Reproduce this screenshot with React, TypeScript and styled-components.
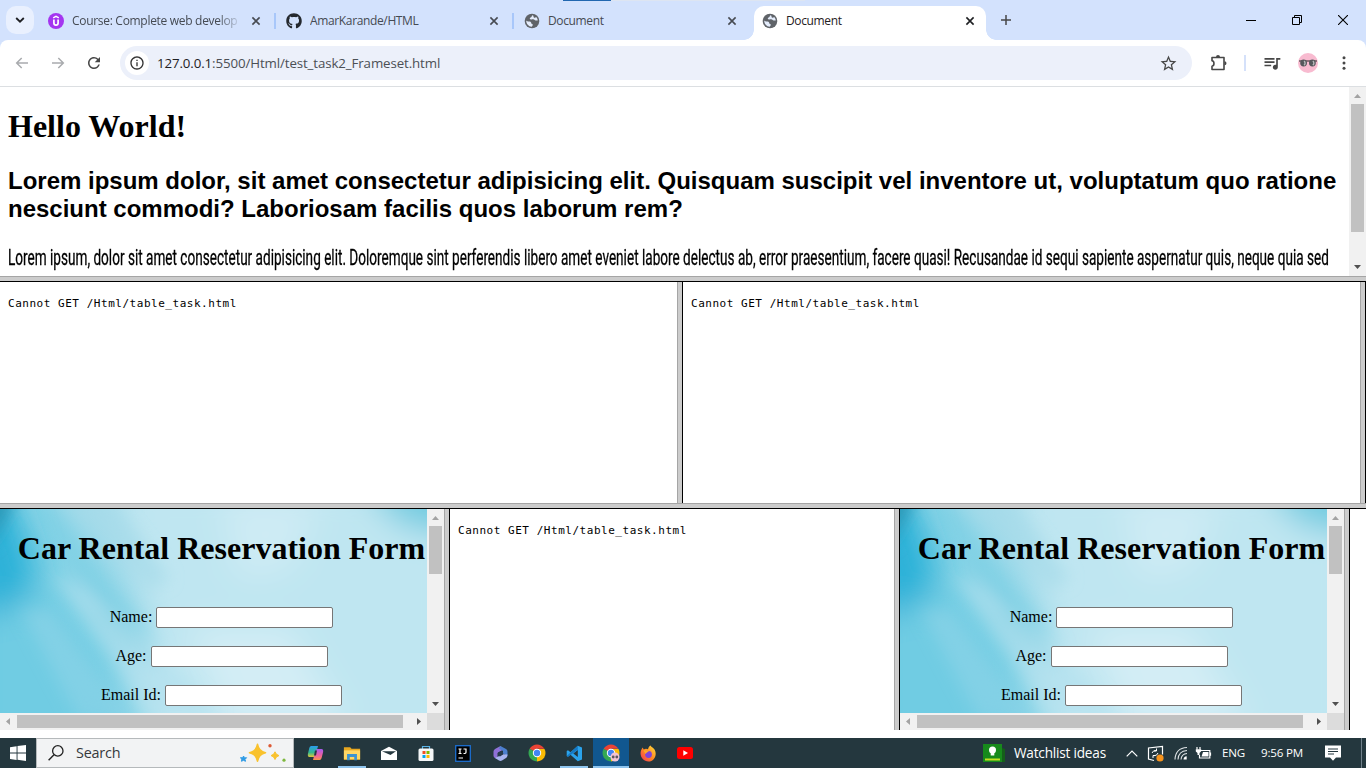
import React from "react";
import styled, { createGlobalStyle } from "styled-components";
import { FaGithub } from "react-icons/fa";
import { MdQueueMusic, MdStarBorder, MdRefresh, MdInfoOutline } from "react-icons/md";

const Global = createGlobalStyle`
  *, *::before, *::after { box-sizing: border-box; }
  html, body { margin: 0; padding: 0; background: #fff; overflow: hidden; }
  svg { display: block; flex: none; }
`;

const UI = `"Open Sans", "Noto Sans", sans-serif`;
const SERIF = `"Liberation Serif", "Times New Roman", serif`;

const Screen = styled.div`
  width: 1366px;
  height: 768px;
  display: flex;
  flex-direction: column;
  background: #fff;
  overflow: hidden;
  font-family: ${UI};
`;

/* ---------- browser chrome ---------- */
const TabStrip = styled.div`
  height: 40px;
  flex: none;
  position: relative;
  display: flex;
  background: #d3e2fd;
`;
const LoadingHint = styled.div`
  position: absolute;
  top: 0;
  left: 563px;
  width: 242px;
  height: 1px;
  background: linear-gradient(90deg, #2167b0 0 48px, #dde5f2 48px);
`;
const TabSearch = styled.div`
  width: 28px;
  height: 28px;
  margin: 6px 6px 0;
  border-radius: 10px;
  background: #e9f0fe;
  display: flex;
  align-items: center;
  justify-content: center;
`;
const TabBox = styled.div<{ $active?: boolean }>`
  width: ${(p) => (p.$active ? 232 : 238)}px;
  height: 34px;
  margin-top: 6px;
  padding-left: 8px;
  padding-bottom: 5px;
  display: flex;
  align-items: center;
  position: relative;
  background: ${(p) => (p.$active ? "#fff" : "transparent")};
  border-radius: 10px 10px 0 0;
  color: ${(p) => (p.$active ? "#1f2023" : "#454a52")};
  &::before, &::after {
    content: "";
    display: ${(p) => (p.$active ? "block" : "none")};
    position: absolute;
    bottom: 0;
    width: 10px;
    height: 10px;
  }
  &::before { left: -10px; background: radial-gradient(circle at 0 0, transparent 9.5px, #fff 10px); }
  &::after { right: -10px; background: radial-gradient(circle at 100% 0, transparent 9.5px, #fff 10px); }
`;
const TabTitle = styled.span<{ $fade?: boolean; $ls: number }>`
  width: 168px;
  margin-left: 8px;
  margin-right: 11px;
  font-size: 12px;
  line-height: 18px;
  letter-spacing: ${(p) => p.$ls}px;
  white-space: nowrap;
  overflow: hidden;
  ${(p) => p.$fade && "mask-image: linear-gradient(90deg, #000 146px, transparent 170px);"}
`;
const TabDivider = styled.i`
  width: 2px;
  height: 16px;
  margin-left: 13px;
  background: #a8c7fa;
`;
const NewTab = styled.div`
  width: 28px;
  margin-left: 6px;
  height: 40px;
  display: flex;
  align-items: center;
  justify-content: center;
`;
const WindowButtons = styled.div`
  margin-left: auto;
  display: flex;
  height: 40px;
`;
const WindowButton = styled.div`
  width: 46px;
  display: flex;
  align-items: center;
  justify-content: center;
`;

const ToolbarBack = styled.div`
  flex: none;
  height: 47px;
  background: #d3e2fd;
`;
const Toolbar = styled.div`
  height: 47px;
  padding-left: 4px;
  display: flex;
  align-items: center;
  background: #fff;
  border-radius: 8px 8px 0 0;
  border-bottom: 1px solid #dcdfe2;
`;
const ToolButton = styled.div<{ $w?: number }>`
  width: ${(p) => p.$w ?? 36}px;
  flex: none;
  display: flex;
  justify-content: center;
  align-items: center;
  color: #474747;
`;
const Omnibox = styled.div`
  width: 1072px;
  flex: none;
  height: 34px;
  margin-left: 8px;
  padding: 0 14px 0 5px;
  border-radius: 17px;
  background: #ecf0fa;
  display: flex;
  align-items: center;
  color: #474747;
`;
const SiteInfo = styled.div`
  width: 24px;
  height: 24px;
  border-radius: 50%;
  background: #fff;
  display: flex;
  align-items: center;
  justify-content: center;
  color: #333;
`;
const Url = styled.span`
  margin-left: 8px;
  flex: 1;
  font-size: 13.3px;
  line-height: 20px;
  letter-spacing: -0.11px;
  color: #4b4f55;
  b { font-weight: 400; color: #1f2023; }
`;
const ToolDivider = styled.i`
  width: 2px;
  height: 16px;
  margin-right: 8px;
  background: #d5e1fa;
`;

/* ---------- frameset ---------- */
const Row = styled.div<{ $h: number }>`
  height: ${(p) => p.$h}px;
  flex: none;
  display: flex;
  overflow: hidden;
`;
const HSplit = styled.div`
  height: 6px;
  flex: none;
  background: #ccc;
  border-top: 1px solid #a5a5a5;
  border-bottom: 1px solid #000;
`;
const VSplit = styled.div`
  width: 6px;
  flex: none;
  background: #ccc;
  border-left: 1px solid #a5a5a5;
  border-right: 1px solid #000;
`;
const Frame = styled.div<{ $w: number }>`
  width: ${(p) => p.$w}px;
  flex: none;
  display: flex;
  overflow: hidden;
  background: #fff;
`;
const Article = styled.div`
  flex: 1;
  padding: 0 8px;
  overflow: hidden;
  color: #000;
`;
const Hello = styled.h1`
  margin: 21px 0 0;
  font: bold 32px/37px ${SERIF};
`;
const Intro = styled.h2`
  margin: 22px 0 0;
  font: bold 24px/28px "Liberation Sans", Arial, sans-serif;
  white-space: nowrap;
`;
const Narrow = styled.p`
  margin: 20px 0 0;
  width: max-content;
  font: 400 21.5px/30px Roboto, sans-serif;
  white-space: nowrap;
  transform: scaleX(0.632);
  transform-origin: 0 0;
  -webkit-text-stroke: 0.3px #000;
`;
const Pre = styled.pre`
  margin: 14px 8px 0;
  font: 11px/16px "DejaVu Sans Mono", monospace;
  letter-spacing: 0.53px;
  color: #000;
`;

const Track = styled.div<{ $horizontal?: boolean }>`
  flex: none;
  display: flex;
  flex-direction: ${(p) => (p.$horizontal ? "row" : "column")};
  align-items: center;
  ${(p) => (p.$horizontal ? "height: 17px; width: 427px;" : "width: 17px;")}
  background: #f1f1f1;
`;
const Arrow = styled.div`
  width: 17px;
  height: 17px;
  flex: none;
  display: flex;
  align-items: center;
  justify-content: center;
`;
const Thumb = styled.div<{ $len: number; $horizontal?: boolean }>`
  ${(p) => (p.$horizontal ? `width: ${p.$len}px; height: 13px;` : `height: ${p.$len}px; width: 13px;`)}
  background: #c1c1c1;
`;
const Gap = styled.div`
  flex: 1;
`;

const CarPane = styled.div`
  display: grid;
  grid-template-columns: 427px 17px;
  grid-template-rows: 204px 17px;
`;
const CarPage = styled.div`
  position: relative;
  overflow: hidden;
  background: #bfe6f2;
`;
const Backdrop = styled.svg`
  position: absolute;
  inset: 0;
`;
const CarForm = styled.div`
  position: relative;
  width: 443px;
  display: flex;
  flex-direction: column;
  align-items: center;
  font: 16px/20px ${SERIF};
  color: #000;
`;
const CarTitle = styled.h1`
  margin: 21px 0 40px;
  font: bold 32px/37px ${SERIF};
  white-space: nowrap;
`;
const Field = styled.label`
  display: flex;
  gap: 4px;
  height: 21px;
  margin-bottom: 18px;
  white-space: nowrap;
`;
const Input = styled.span`
  width: 177px;
  height: 21px;
  background: #fff;
  border: 1px solid #767676;
  border-radius: 2px;
`;
const Corner = styled.div`
  background: #dcdcdc;
`;

/* ---------- taskbar ---------- */
const Taskbar = styled.div`
  height: 30px;
  margin-top: 8px;
  flex: none;
  display: flex;
  background: #24373e;
  color: #fff;
`;
const Start = styled.div`
  width: 36px;
  display: flex;
  align-items: center;
  justify-content: center;
`;
const SearchBox = styled.div`
  width: 258px;
  margin-right: 3px;
  padding: 0 7px 0 11px;
  display: flex;
  align-items: center;
  background: #f2f3f4;
  border: 1px solid #b5b9bb;
  color: #36393c;
  font-size: 14.4px;
  line-height: 20px;
`;
const SearchLabel = styled.span`
  flex: 1;
  margin-left: 12px;
  letter-spacing: -0.2px;
`;
const AppButton = styled.div<{ $open?: boolean; $active?: boolean }>`
  width: 36px;
  margin-right: 1px;
  display: flex;
  align-items: center;
  justify-content: center;
  position: relative;
  background: ${(p) => (p.$active ? "#11578f" : "transparent")};
  &::after {
    content: "";
    display: ${(p) => (p.$open || p.$active ? "block" : "none")};
    position: absolute;
    bottom: 0;
    height: 2px;
    left: ${(p) => (p.$active ? 0 : 4)}px;
    right: ${(p) => (p.$active ? 0 : 4)}px;
    background: #8fc5ef;
  }
`;
const Tray = styled.div`
  margin-left: auto;
  display: flex;
  align-items: center;
  font-size: 13.6px;
  line-height: 18px;
`;
const Item = styled.div<{ $w: number; $size?: number; $ls?: number }>`
  width: ${(p) => p.$w}px;
  flex: none;
  white-space: nowrap;
  ${(p) => p.$size && `font-size: ${p.$size}px;`}
  letter-spacing: ${(p) => p.$ls ?? 0}px;
`;
const ShowDesktop = styled.i`
  width: 5px;
  height: 30px;
  border-left: 1px solid #70808a;
`;

/* ---------- drawings ---------- */
const Cross = ({ color = "#474b52" }: { color?: string }) => (
  <svg width="10" height="10" viewBox="0 0 10 10">
    <path d="M1.4 1.4l7.200 7.200M8.600 1.400L1.400 8.600" stroke={color} strokeWidth="1.600" />
  </svg>
);
const Udemy = () => (
  <svg width="16" height="16" viewBox="0 0 16 16">
    <circle cx="8" cy="8" r="8" fill="#a435f0" />
    <path d="M5.2 4.9L8 3.3l2.8 1.6" fill="none" stroke="#fff" strokeWidth="1.4" />
    <path d="M5.9 6.6v3.3c0 1.4.8 2.2 2.1 2.2s2.1-.8 2.1-2.2V6.6" fill="none" stroke="#fff" strokeWidth="1.7" />
  </svg>
);
const Globe = () => (
  <svg width="16" height="16" viewBox="0 0 16 16">
    <circle cx="8" cy="8" r="7.300" fill="#5f6368" />
    <path d="M8.700 2.200C7 2.700 8.300 4 6.700 4.600 5.600 5 5.500 5.600 6.300 6.200c1.200.8 2.300-.2 3.500.3.900.4 1.400 1 2.700 1 .8 0 1.300-.3 1.300-.3A6 6 0 0 0 12.200 4C11.400 4.600 10.600 5 9.900 4.400 9.200 3.800 10 2.900 8.700 2.200z" fill="#e4ecfb" />
    <path d="M2.200 7.500c1.300 1.600 3 .4 4.300 1.300 1.200.8.300 1.900 1.600 2.300 1.300.4.700 1.500-.300 2.600C4.500 13.600 2.300 11 2.200 7.500z" fill="#e4ecfb" />
  </svg>
);
const BackArrow = ({ flip }: { flip?: boolean }) => (
  <svg width="14" height="12" viewBox="0 0 14 12" transform={flip ? "scale(-1 1)" : undefined}>
    <path d="M13 6H2M6.700 1L1.700 6l5 5" fill="none" stroke="#a9abae" strokeWidth="1.5" />
  </svg>
);
const Avatar = () => (
  <svg width="20" height="20" viewBox="0 0 20 20">
    <circle cx="10" cy="10" r="10" fill="#f8bbd0" />
    <path d="M1 8h18" stroke="#4a4044" strokeWidth="1.200" />
    <circle cx="5.600" cy="10" r="3.400" fill="#55585c" />
    <circle cx="14.400" cy="10" r="3.400" fill="#55585c" />
    <path d="M6 8.200a2.400 2.400 0 0 1 0 4M14.800 8.200a2.400 2.400 0 0 1 0 4" stroke="#b8babc" fill="none" strokeWidth="1.400" />
  </svg>
);
const Tri = ({ dir, on }: { dir: "up" | "down" | "left" | "right"; on?: boolean }) => {
  const d = { up: "M0 6h7L3.500 2z", down: "M0 1h7L3.500 5z", left: "M5 0v7L1 3.500z", right: "M2 0v7l4-3.500z" }[dir];
  return (
    <Arrow>
      <svg width="7" height="7" viewBox="0 0 7 7"><path d={d} fill={on ? "#505050" : "#a3a3a3"} /></svg>
    </Arrow>
  );
};
const Sky = ({ id }: { id: string }) => (
  <Backdrop width="427" height="204" viewBox="0 0 427 204" preserveAspectRatio="none">
    <defs>
      <linearGradient id={`${id}a`} x1="0" y1="110" x2="170" y2="0" gradientUnits="userSpaceOnUse">
        <stop offset="0" stopColor="#5cc5e0" /><stop offset=".35" stopColor="#7fd1e5" />
        <stop offset=".7" stopColor="#a3dbea" /><stop offset="1" stopColor="#bbe5f0" />
      </linearGradient>
      <filter id={`${id}b`} x="-50%" y="-50%" width="200%" height="200%"><feGaussianBlur stdDeviation="16" /></filter>
      <filter id={`${id}c`} x="-50%" y="-50%" width="200%" height="200%"><feGaussianBlur stdDeviation="8" /></filter>
    </defs>
    <rect width="427" height="204" fill={`url(#${id}a)`} />
    <g filter={`url(#${id}b)`}>
      <path d="M-30 90L40 90L90 160L110 240H-30z" fill="#6fcce3" />
      <path d="M120 -30L250 -30L460 -20V240H150L130 160L150 120z" fill="#bfe6f1" />
      <path d="M220 -10L320 -10L290 60L240 70z" fill="#ceebf4" />
      <path d="M360 -30H470V30L400 15z" fill="#6fcbe0" />
      <path d="M-30 -20L10 -10L35 60L22 95L-30 110z" fill="#2bb1d8" />
      <path d="M190 120L290 120L350 220H230z" fill="#d3edf5" />
    </g>
    <g filter={`url(#${id}c)`}>
      <path d="M-12 -12H16L2 14L-12 40z" fill="#2b95b4" />
      <path d="M30 -5L50 -5L110 75L165 140L100 95z" fill="#74cde4" opacity=".5" />
      <path d="M52 64L84 78L220 204H150z" fill="#b2e1ee" opacity=".65" />
      <path d="M20 100L50 100L135 214H80z" fill="#98d8e8" opacity=".45" />
      <path d="M85 100L110 106L170 160L145 150z" fill="#8dd4e6" opacity=".5" />
      <path d="M60 -10L110 -10L170 70L150 80z" fill="#a6dcea" opacity=".7" />
    </g>
  </Backdrop>
);
const ChromeLogo = ({ user }: { user?: boolean }) => (
  <svg width="18" height="18" viewBox="0 0 18 18">
    <path d="M9 9L1.640 4.750A8.500 8.500 0 0 1 16.360 4.750H9z" fill="#ea4335" />
    <path d="M9 9L16.360 4.750A8.500 8.500 0 0 1 9 17.500z" fill="#fbbc05" />
    <path d="M9 9v8.500A8.500 8.500 0 0 1 1.640 4.750z" fill="#34a853" />
    <path d="M9 4.900h7.400L13 11.300 9 17.500 12.500 11z" fill="#fbbc05" />
    <circle cx="9" cy="9" r="4.200" fill="#fff" />
    <circle cx="9" cy="9" r="3.200" fill="#4285f4" />
    {user && <>
      <circle cx="13" cy="13" r="4.500" fill="#f3c3d5" />
      <circle cx="11.200" cy="13" r="1.400" fill="#5c5860" /><circle cx="14.800" cy="13" r="1.400" fill="#5c5860" />
    </>}
  </svg>
);

const Tab = ({ icon, title, active, fade, last, ls = -0.36 }: { icon: React.ReactNode; title: string; active?: boolean; fade?: boolean; last?: boolean; ls?: number }) => (
  <TabBox $active={active}>
    {icon}
    <TabTitle $fade={fade} $ls={ls}>{title}</TabTitle>
    <Cross color={active ? "#1f2023" : undefined} />
    {!last && <TabDivider />}
  </TabBox>
);

const CarFrame = ({ id }: { id: string }) => (
  <Frame $w={444}>
    <CarPane>
      <CarPage>
        <Sky id={id} />
        <CarForm>
          <CarTitle>Car Rental Reservation Form</CarTitle>
          <Field>Name: <Input /></Field>
          <Field>Age: <Input /></Field>
          <Field>Email Id: <Input /></Field>
        </CarForm>
      </CarPage>
      <Track><Tri dir="up" /><Thumb $len={48} /><Gap /><Tri dir="down" on /></Track>
      <Track $horizontal><Tri dir="left" /><Thumb $horizontal $len={386} /><Gap /><Tri dir="right" on /></Track>
      <Corner />
    </CarPane>
  </Frame>
);

const Missing = () => <Pre>Cannot GET /Html/table_task.html</Pre>;

export default function App() {
  return (
    <Screen>
      <Global />
      <TabStrip>
        <LoadingHint />
        <TabSearch>
          <svg width="10" height="6" viewBox="0 0 10 6"><path d="M1.200 1L5 4.700 8.800 1" fill="none" stroke="#1f2023" strokeWidth="1.800" /></svg>
        </TabSearch>
        <Tab icon={<Udemy />} title="Course: Complete web develop" fade ls={-0.3} />
        <Tab icon={<FaGithub size={16} color="#24292f" />} title="AmarKarande/HTML" />
        <Tab icon={<Globe />} title="Document" last />
        <Tab icon={<Globe />} title="Document" active last />
        <NewTab>
          <svg width="10" height="10" viewBox="0 0 10 10"><path d="M5 0v10M0 5h10" stroke="#474747" strokeWidth="1.500" /></svg>
        </NewTab>
        <WindowButtons>
          <WindowButton><svg width="10" height="10" viewBox="0 0 10 10"><path d="M0 5.500h10" stroke="#000" /></svg></WindowButton>
          <WindowButton><svg width="10" height="10" viewBox="0 0 10 10"><path d="M.5 2.500h7v7h-7zM2.500 2.500v-2h7v7h-2" fill="none" stroke="#000" /></svg></WindowButton>
          <WindowButton><svg width="10" height="10" viewBox="0 0 10 10"><path d="M0 0l10 10M10 0L0 10" stroke="#000" strokeWidth="1.100" /></svg></WindowButton>
        </WindowButtons>
      </TabStrip>
      <ToolbarBack>
        <Toolbar>
          <ToolButton><BackArrow /></ToolButton>
          <ToolButton><BackArrow flip /></ToolButton>
          <ToolButton><MdRefresh size={18} /></ToolButton>
          <Omnibox>
            <SiteInfo><MdInfoOutline size={16} /></SiteInfo>
            <Url><b>127.0.0.1</b>:5500/Html/test_task2_Frameset.html</Url>
            <MdStarBorder size={19} />
          </Omnibox>
          <ToolButton $w={52}>
            <svg width="18" height="18" viewBox="0 0 18 18">
              <path d="M3 3.500h12v12H3v-3.300c2.600-.4 2.600-5 0-5.400z" fill="none" stroke="#474747" strokeWidth="1.600" strokeLinejoin="round" />
              <path d="M7 3a2 2 0 0 1 4 0zM15.500 7.300a2 2 0 0 1 0 4z" fill="#474747" />
            </svg>
          </ToolButton>
          <ToolDivider />
          <ToolButton><MdQueueMusic size={20} /></ToolButton>
          <ToolButton><Avatar /></ToolButton>
          <ToolButton>
            <svg width="4" height="14" viewBox="0 0 4 14"><circle cx="2" cy="1.700" r="1.500" fill="#474747" /><circle cx="2" cy="7" r="1.500" fill="#474747" /><circle cx="2" cy="12.300" r="1.500" fill="#474747" /></svg>
          </ToolButton>
        </Toolbar>
      </ToolbarBack>

      <Row $h={189}>
        <Frame $w={1366}>
          <Article>
            <Hello>Hello World!</Hello>
            <Intro>Lorem ipsum dolor, sit amet consectetur adipisicing elit. Quisquam suscipit vel inventore ut, voluptatum quo ratione<br />nesciunt commodi? Laboriosam facilis quos laborum rem?</Intro>
            <Narrow>Lorem ipsum, dolor sit amet consectetur adipisicing elit. Doloremque sint perferendis libero amet eveniet labore delectus ab, error praesentium, facere quasi! Recusandae id sequi sapiente aspernatur quis, neque quia sed</Narrow>
          </Article>
          <Track><Tri dir="up" /><Thumb $len={128} /><Gap /><Tri dir="down" on /></Track>
        </Frame>
      </Row>
      <HSplit />
      <Row $h={221}>
        <Frame $w={677}><Missing /></Frame>
        <VSplit />
        <Frame $w={677}><Missing /></Frame>
        <VSplit />
      </Row>
      <HSplit />
      <Row $h={221}>
        <CarFrame id="skyLeft" />
        <VSplit />
        <Frame $w={444}><Missing /></Frame>
        <VSplit />
        <CarFrame id="skyRight" />
        <VSplit />
        <Frame $w={16} />
      </Row>

      <Taskbar>
        <Start>
          <svg width="16" height="16" viewBox="0 0 16 16"><path d="M0 2.200L6.600 1.200V7.600H0zM7.500 1.100L16 0v7.600H7.500zM0 8.500h6.600v6.400L0 13.900zM7.500 8.500H16V16l-8.500-1.200z" fill="#fff" /></svg>
        </Start>
        <SearchBox>
          <svg width="16" height="16" viewBox="0 0 16 16"><circle cx="9.800" cy="5.900" r="5.200" fill="none" stroke="#222" strokeWidth="1.300" /><path d="M6 9.700L.6 15.300" stroke="#222" strokeWidth="1.400" /></svg>
          <SearchLabel>Search</SearchLabel>
          <svg width="47" height="20" viewBox="0 0 47 20">
            <path d="M18.500 1.300q1.300 7.100 8 8.400q-6.700 1.300-8 8.400q-1.300-7.100-8-8.400q6.700-1.300 8-8.400z" fill="#f9c22e" stroke="#f9c22e" strokeWidth="1.600" strokeLinejoin="round" />
            <path d="M36 8.800q.8 3 4 3.800Q36.800 13.400 36 16.500q-.8-3.100-4-3.900Q35.200 11.800 36 8.800z" fill="#f9c22e" stroke="#f9c22e" strokeLinejoin="round" />
            <path d="M4.600 13l.8 1.900 2.200-.2-1.600 1.600.5 2-2.100-1-1.900 1 .3-2.100-1.400-1.400 2.300-.1z" fill="#2f9be5" stroke="#2f9be5" />
            <circle cx="31" cy="2.700" r="1.700" fill="#dd5a35" /><circle cx="45" cy="17.200" r="1.600" fill="#7eb83f" />
          </svg>
        </SearchBox>
        <AppButton>
          <svg width="17" height="16" viewBox="0 0 17 16">
            <defs>
              <linearGradient id="cpA" x1="0" y1="0" x2="0" y2="1"><stop stopColor="#2a9cf0" /><stop offset=".6" stopColor="#35b98c" /><stop offset="1" stopColor="#e5c838" /></linearGradient>
              <linearGradient id="cpB" x1="0" y1="0" x2="0" y2="1"><stop stopColor="#a65cf0" /><stop offset=".6" stopColor="#f0609c" /><stop offset="1" stopColor="#f6984a" /></linearGradient>
            </defs>
            <path d="M4.200 1H11L9 8.500 7.300 12H2.500C.7 12 .6 10 1 8.500L2.300 3Q2.800 1 4.200 1z" fill="url(#cpA)" />
            <path d="M9.700 4h4.800c1.800 0 1.900 2 1.500 3.500L14.600 13q-.5 2-2 2H6l2-7.500z" fill="url(#cpB)" />
            <path d="M8 5.500h2L9 10.500H7z" fill="#24373e" />
          </svg>
        </AppButton>
        <AppButton $open>
          <svg width="18" height="15" viewBox="0 0 20 16"><path d="M1 1h7l1.500 1.700H19V15H1z" fill="#e8a820" /><path d="M1 4.500h18V14.500H1z" fill="#ffd766" /><path d="M4.500 8.500h11V15.500h-3V12h-5v3.500h-3z" fill="#3c93d2" /></svg>
        </AppButton>
        <AppButton>
          <svg width="18" height="15" viewBox="0 0 18 15"><path d="M1 5L9 .8l8 4.200V14H1z" fill="#fff" /><path d="M2 5.300h14L10.500 9z" fill="#24373e" /></svg>
        </AppButton>
        <AppButton>
          <svg width="16" height="17" viewBox="0 0 16 17"><path d="M4.500 4V1.500h7V4" fill="none" stroke="#5ab4e8" strokeWidth="1.200" /><rect x=".5" y="3.500" width="15" height="12.500" rx="1.500" fill="#f5f7f8" /><path d="M4.500 6h3v3h-3z" fill="#f25022" /><path d="M8.500 6h3v3h-3z" fill="#7fba00" /><path d="M4.500 10h3v3h-3z" fill="#00a4ef" /><path d="M8.500 10h3v3h-3z" fill="#ffb900" /></svg>
        </AppButton>
        <AppButton>
          <svg width="16" height="17" viewBox="0 0 16 17"><rect x=".7" y=".7" width="14.600" height="15.600" fill="#000" stroke="#1c6fd0" strokeWidth="1.300" /><path d="M3.500 4h3M5 4v4.500M3.500 8.500h3M8.500 4H11v3.300q0 1.400-2.500 1.200M3.500 13H8" stroke="#fff" strokeWidth="1.200" fill="none" /></svg>
        </AppButton>
        <AppButton>
          <svg width="17" height="17" viewBox="0 0 17 17">
            <path d="M8.500 1L3 4Q1.500 5 1.500 6.500v4.300Q1.500 12.300 3 13l2.500 1V8L10.500 5z" fill="#8f70d8" />
            <path d="M8.500 1l5.500 3q1.500.8 1.500 2.500V11L11 8.500V6L7 3.500z" fill="#4c7fce" />
            <path d="M15.500 9.500Q15.500 12 14 13l-4 2.500q-1.500.8-3 0L3 13l8-3.700z" fill="#a9b4f0" />
            <path d="M6 7.500L9 6l2 1v2.500L8 11.500 6 10.500z" fill="#27394e" />
          </svg>
        </AppButton>
        <AppButton><ChromeLogo /></AppButton>
        <AppButton $open>
          <svg width="17" height="17" viewBox="0 0 17 17"><path d="M11.800.7L16 2.500v12L11.800 16.300 4.500 9.800 2 11.800.7 11V6L2 5.200l2.500 2z" fill="#2aa3ec" /><path d="M11.800 5v7L7.300 8.500z" fill="#24373e" /><path d="M.7 11L11.800.7v4L2 11.800z" fill="#1579c4" /></svg>
        </AppButton>
        <AppButton $active><ChromeLogo user /></AppButton>
        <AppButton>
          <svg width="17" height="17" viewBox="0 0 17 17">
            <defs><linearGradient id="fx" x1="1" y1="0" x2="0" y2="1"><stop stopColor="#ffe23c" /><stop offset=".5" stopColor="#ff8a22" /><stop offset="1" stopColor="#f5305c" /></linearGradient></defs>
            <path d="M10.500.5c1 2 3 2 4.200 4.200C17.500 10 14 16.500 8.500 16.500S-.8 11 1 5.500L2.500 2.500 3.800 4.500C5 3.500 7 3.600 8 4.300 8.300 2.500 9.400 1 10.500.5z" fill="url(#fx)" />
            <circle cx="8.500" cy="9.500" r="3.400" fill="#8044d8" /><path d="M3.500 5.500C6 4.800 7.500 6 9 6.800 7 7 6.500 8 5.500 9z" fill="#ffa928" />
          </svg>
        </AppButton>
        <AppButton>
          <svg width="16" height="12" viewBox="0 0 16 12"><rect width="16" height="12" rx="2.500" fill="#f00" /><path d="M6.300 3.300L11 6 6.300 8.700z" fill="#fff" /></svg>
        </AppButton>
        <Tray>
          <Item $w={31}>
            <svg width="22" height="18" viewBox="0 0 22 18"><path d="M19 4l3 1v13h-4z" fill="#155f1a" /><rect width="19" height="18" fill="#178a1c" /><circle cx="9.500" cy="6" r="3.500" fill="#fff" /><path d="M7.700 8h3.600v3.500H7.700z" fill="#fff" /><path d="M2 14.500h15v2H2z" fill="#c4e020" /></svg>
          </Item>
          <Item $w={112} $ls={-0.2}>Watchlist ideas</Item>
          <Item $w={21}><svg width="12" height="7" viewBox="0 0 12 7"><path d="M.7 6.300L6 1l5.300 5.300" fill="none" stroke="#fff" strokeWidth="1.200" /></svg></Item>
          <Item $w={27}>
            <svg width="17" height="17" viewBox="0 0 17 17"><path d="M7 15.500L1.500 14V3L15.500 1.500v8" fill="none" stroke="#fff" strokeWidth="1.200" /><path d="M5 8q1-3 4.500-2.500M9.500 3.500v2.500H7M11 8q-1 3-4.500 2.800M6 13v-2.500h2" fill="none" stroke="#fff" /><circle cx="13" cy="13" r="3.600" fill="#f7941d" /></svg>
          </Item>
          <Item $w={21}>
            <svg width="14" height="14" viewBox="0 0 14 14"><path d="M1 13.500Q1.500 2 13 1.500M4 13.500Q4.500 5 13 4.500M7 13.500Q7.500 8 13 7.500" fill="none" stroke="#dfe4e6" strokeWidth="1.100" /><path d="M9.500 13.500q.2-3 3.200-3.200v3.200z" fill="#fff" /></svg>
          </Item>
          <Item $w={27}>
            <svg width="17" height="13" viewBox="0 0 17 13"><path d="M5.500 3.500h9.300v7.500H4.500V8M15.500 5.500v3.300M2 0v2.500M5 0v2.500" fill="none" stroke="#fff" strokeWidth="1.200" /><path d="M.8 2.200h5.400v2L4.500 6v2h-2V6L.8 4.500zM8 5h5.500v4.500H6.500z" fill="#fff" /></svg>
          </Item>
          <Item $w={39} $size={11.6} $ls={-0.2}>ENG</Item>
          <Item $w={64} $size={11.6} $ls={-0.2}>9:56 PM</Item>
          <Item $w={36}>
            <svg width="16" height="16" viewBox="0 0 16 16"><path d="M0 .5h16v12h-5L8 15.800 5 12.500H0z" fill="#fff" /><path d="M3 4h10M3 6.500h10M3 9h6" stroke="#24373e" strokeWidth="1.100" /></svg>
          </Item>
          <ShowDesktop />
        </Tray>
      </Taskbar>
    </Screen>
  );
}
